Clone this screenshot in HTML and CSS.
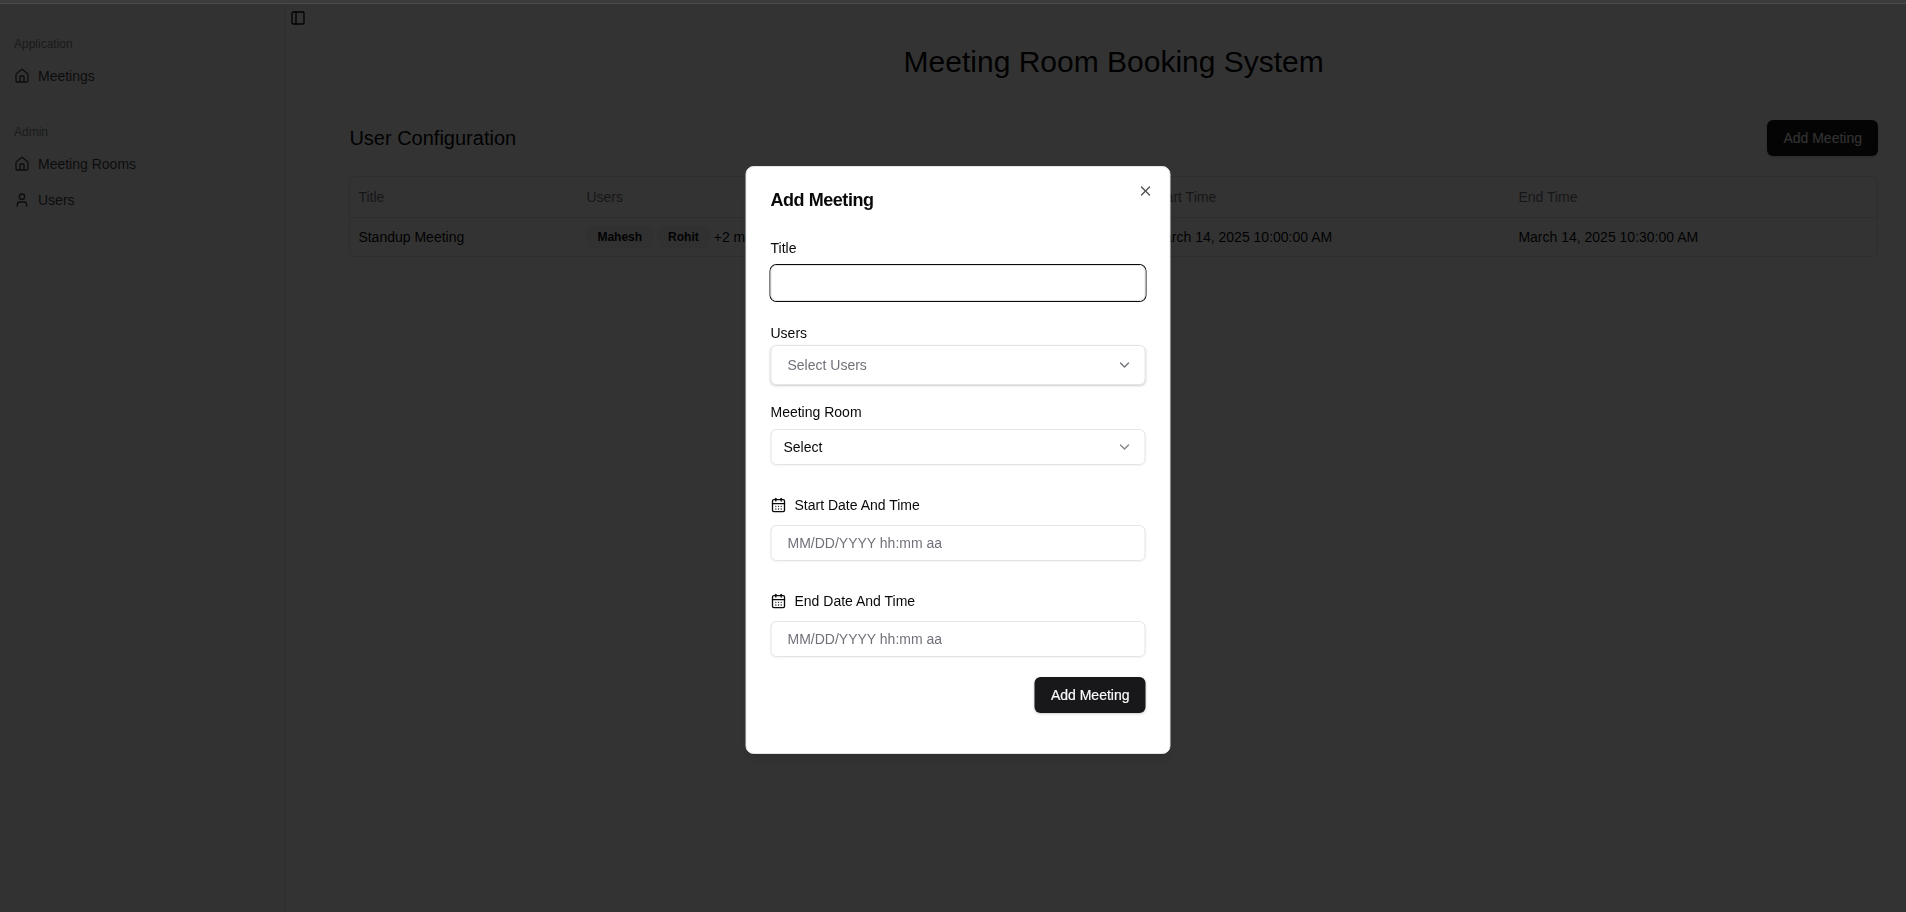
FILE: index.html
```html
<!DOCTYPE html>
<html lang="en">
<head>
<meta charset="utf-8">
<title>Meeting Room Booking System</title>
<link rel="stylesheet" href="styles.css">
</head>
<body>
<svg class="sprite" aria-hidden="true">
  <symbol id="house" viewBox="0 0 24 24"><path d="M15 21v-8a1 1 0 0 0-1-1h-4a1 1 0 0 0-1 1v8"/><path d="M3 10a2 2 0 0 1 .709-1.528l7-5.999a2 2 0 0 1 2.582 0l7 5.999A2 2 0 0 1 21 10v9a2 2 0 0 1-2 2H5a2 2 0 0 1-2-2z"/></symbol>
  <symbol id="user" viewBox="0 0 24 24"><path d="M19 21v-2a4 4 0 0 0-4-4H9a4 4 0 0 0-4 4v2"/><circle cx="12" cy="7" r="4"/></symbol>
  <symbol id="panel" viewBox="0 0 24 24"><rect width="18" height="18" x="3" y="3" rx="2"/><path d="M9 3v18"/></symbol>
  <symbol id="chevron" viewBox="0 0 24 24"><path d="m6 9 6 6 6-6"/></symbol>
  <symbol id="close" viewBox="0 0 24 24"><path d="M18 6 6 18"/><path d="m6 6 12 12"/></symbol>
  <symbol id="calendar" viewBox="0 0 24 24"><path d="M8 2v4"/><path d="M16 2v4"/><rect width="18" height="18" x="3" y="4" rx="2"/><path d="M3 10h18"/><path d="M8 14h.01"/><path d="M12 14h.01"/><path d="M16 14h.01"/><path d="M8 18h.01"/><path d="M12 18h.01"/><path d="M16 18h.01"/></symbol>
</svg>
<div class="app">
  <aside class="sidebar">
    <nav class="group">
      <div class="group-label">Application</div>
      <a class="item"><svg class="icon"><use href="#house"/></svg>Meetings</a>
    </nav>
    <nav class="group">
      <div class="group-label">Admin</div>
      <a class="item"><svg class="icon"><use href="#house"/></svg>Meeting Rooms</a>
      <a class="item"><svg class="icon"><use href="#user"/></svg>Users</a>
    </nav>
  </aside>
  <div class="trigger"><svg class="icon"><use href="#panel"/></svg></div>
  <main class="main">
    <h1 class="page-title">Meeting Room Booking System</h1>
    <div class="toolbar">
      <h2 class="section-title">User Configuration</h2>
      <button class="button">Add Meeting</button>
    </div>
    <div class="table">
      <div class="row head"><span>Title</span><span>Users</span><span>Meeting Room</span><span>Start Time</span><span>End Time</span></div>
      <div class="row"><span>Standup Meeting</span><span class="people"><b class="badge">Mahesh</b><b class="badge">Rohit</b>+2 more</span><span>Room 1</span><span>March 14, 2025 10:00:00 AM</span><span>March 14, 2025 10:30:00 AM</span></div>
    </div>
  </main>
</div>
<div class="overlay"></div>
<div class="topbar"></div>
<section class="dialog" role="dialog">
  <h2 class="dialog-title">Add Meeting</h2>
  <svg class="icon close"><use href="#close"/></svg>
  <label class="label">Title</label>
  <div class="field focused"></div>
  <label class="label users-label">Users</label>
  <div class="field users-field">Select Users<svg class="icon chevron"><use href="#chevron"/></svg></div>
  <label class="label room-label">Meeting Room</label>
  <div class="field room-field">Select<svg class="icon chevron dim"><use href="#chevron"/></svg></div>
  <label class="label date-label"><svg class="icon"><use href="#calendar"/></svg>Start Date And Time</label>
  <div class="field date-field">MM/DD/YYYY hh:mm aa</div>
  <label class="label date-label"><svg class="icon"><use href="#calendar"/></svg>End Date And Time</label>
  <div class="field date-field">MM/DD/YYYY hh:mm aa</div>
  <button class="button submit">Add Meeting</button>
</section>
</body>
</html>
```
FILE: styles.css
```css
* { box-sizing: border-box; }
body {
  margin: 0;
  height: 912px;
  overflow: hidden;
  background: #fff;
  color: #09090b;
  font: 14px/20px "Liberation Sans", Arial, sans-serif;
}
h1, h2 { margin: 0; font-weight: 400; }
.sprite { display: none; }
.icon {
  width: 16px;
  height: 16px;
  flex: none;
  fill: none;
  stroke: currentColor;
  stroke-width: 2;
  stroke-linecap: round;
  stroke-linejoin: round;
}
.app { display: flex; height: 912px; padding-top: 4px; }

.sidebar {
  width: 286px;
  padding: 16px 6px;
  background: #fafafa;
  border-right: 1px solid #e5e7eb;
  color: #3f3f46;
}
.group { display: flex; flex-direction: column; padding: 8px 0; }
.group + .group { margin-top: 8px; }
.group-label { height: 32px; padding: 0 8px; font-size: 12px; line-height: 32px; color: #85858b; }
.item { display: flex; align-items: center; gap: 8px; height: 32px; padding: 0 8px; }
.item + .item { margin-top: 4px; }
.trigger { width: 24px; padding: 6px 4px; }

.main { flex: 1; padding: 40px 28px 0 39.4px; }
.page-title { font-size: 30px; line-height: 36px; text-align: center; }
.toolbar { display: flex; align-items: center; justify-content: space-between; margin-top: 40px; }
.section-title { font-size: 20px; line-height: 28px; }
.button {
  height: 36px;
  padding: 0 16px;
  border: 0;
  border-radius: 6px;
  background: #18181b;
  color: #fafafa;
  font: 14px/20px "Liberation Sans", Arial, sans-serif;
  box-shadow: 0 1px 3px rgba(0, 0, 0, .1), 0 1px 2px rgba(0, 0, 0, .1);
}
.table { margin-top: 20px; border: 1px solid #e4e4e7; border-radius: 6px; }
.row {
  display: grid;
  grid-template-columns: 228px 284px 282px 366px 1fr;
  align-items: center;
  height: 38px;
}
.row > span { padding: 0 8px; }
.head { height: 41px; border-bottom: 1px solid #e4e4e7; color: #71717a; }
.people { display: flex; align-items: center; gap: 4px; }
.badge {
  height: 22px;
  padding: 0 11px;
  border-radius: 6px;
  background: #f4f4f5;
  font-size: 12px;
  line-height: 22px;
}

.overlay { position: fixed; inset: 0; background: rgba(0, 0, 0, .8); }
.topbar { position: fixed; inset: 0 0 auto; height: 4px; background: #3c3c3c; border-bottom: 1px solid #4a4a4a; }

.dialog {
  position: fixed;
  left: 958px;
  top: 166px;
  transform: translateX(-50%);
  display: flex;
  flex-direction: column;
  width: 425px;
  height: 588px;
  padding: 24px;
  border: 1px solid #e4e4e7;
  border-radius: 8px;
  background: #fff;
  box-shadow: 0 10px 15px -3px rgba(0, 0, 0, .1), 0 4px 6px -4px rgba(0, 0, 0, .1);
}
.dialog-title { font-size: 18px; line-height: 18px; font-weight: 700; letter-spacing: -.45px; }
.close { position: absolute; top: 16px; right: 16px; opacity: .7; }
.label { height: 20px; margin-top: 29px; }
.field {
  display: flex;
  align-items: center;
  height: 36px;
  padding: 0 12px;
  border: 1px solid #e4e4e7;
  border-radius: 6px;
  box-shadow: 0 1px 2px rgba(0, 0, 0, .05);
}
.focused { margin-top: 7px; box-shadow: 0 0 0 1px #09090b; }
.users-label { margin-top: 22px; }
.users-field {
  height: 40px;
  margin-top: 2px;
  padding: 0 12px 0 16px;
  color: #71717a;
  box-shadow: 0 1px 3px rgba(0, 0, 0, .1), 0 1px 2px rgba(0, 0, 0, .1);
}
.chevron { margin-left: auto; }
.dim { color: #09090b; opacity: .5; }
.room-label { margin-top: 17px; }
.room-field { margin-top: 7px; }
.date-label { display: flex; align-items: center; gap: 8px; margin-top: 30px; }
.date-field { margin-top: 10px; padding: 0 16px; color: #71717a; }
.submit { align-self: flex-end; margin-top: 20px; -webkit-text-stroke: .2px #fafafa; }
```
